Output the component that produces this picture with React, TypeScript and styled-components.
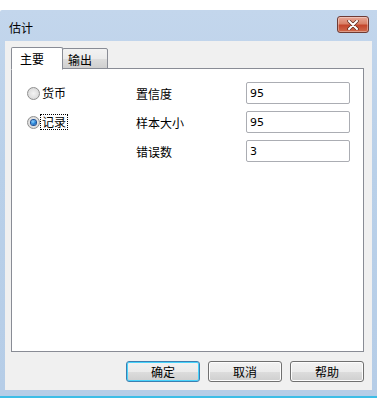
import React, { useState } from "react";
import styled, { createGlobalStyle } from "styled-components";

const GlobalStyle = createGlobalStyle`
    html, body {
        margin: 0;
        padding: 0;
        background: #ffffff;
    }
    body {
        font-family: "Noto Sans CJK SC", "Noto Sans", sans-serif;
        font-size: 12px;
        color: #000;
    }
`;

const rows = [
    { label: "置信度", value: "95" },
    { label: "样本大小", value: "95" },
    { label: "错误数", value: "3" },
];

const radios = ["货币", "记录"];

const App = () => {
    const [tab, setTab] = useState(0);
    const [mode, setMode] = useState(1);

    return (
        <>
            <GlobalStyle />
            <Page>
                <Window>
                    <TitleBar>
                        <Title>估计</Title>
                        <CloseButton aria-label="关闭">
                            <svg width="12" height="10" viewBox="0 0 12 10">
                                <path d="M2 1 L10 9 M10 1 L2 9" stroke="#5a2a20" strokeWidth="3.4" strokeLinecap="round" />
                                <path d="M2 1 L10 9 M10 1 L2 9" stroke="#ffffff" strokeWidth="2" strokeLinecap="round" />
                            </svg>
                        </CloseButton>
                    </TitleBar>
                    <Client>
                        <Tabs>
                            <Tab $active={tab === 0} onClick={() => setTab(0)}>主要</Tab>
                            <Tab $active={tab === 1} onClick={() => setTab(1)}>输出</Tab>
                        </Tabs>
                        <Panel>
                            <Form>
                                {rows.map((row, i) => (
                                    <React.Fragment key={row.label}>
                                        <RadioCell>
                                            {radios[i] && (
                                                <RadioLabel onClick={() => setMode(i)}>
                                                    <RadioCircle $checked={mode === i} />
                                                    <RadioText $focused={mode === i}>{radios[i]}</RadioText>
                                                </RadioLabel>
                                            )}
                                        </RadioCell>
                                        <Label>{row.label}</Label>
                                        <Input defaultValue={row.value} />
                                    </React.Fragment>
                                ))}
                            </Form>
                        </Panel>
                        <Buttons>
                            <Button $default>确定</Button>
                            <Button>取消</Button>
                            <Button>帮助</Button>
                        </Buttons>
                    </Client>
                </Window>
            </Page>
        </>
    );
};

export default App;

const Page = styled.div`
    width: 377px;
    height: 398px;
    padding-top: 10px;
    box-sizing: border-box;
    overflow: hidden;
`

const Window = styled.div`
    height: 388px;
    box-sizing: border-box;
    display: flex;
    flex-direction: column;
    padding: 0 5px 6px 5px;
    background: linear-gradient(to bottom, #c3d6ec 0%, #b9d0e9 40%, #b6cde7 100%);
    border-bottom: 2px solid #3dbde6;
    border-top-left-radius: 2px;
`

const TitleBar = styled.div`
    height: 31px;
    display: flex;
    align-items: center;
    justify-content: space-between;
    padding-left: 4px;
    padding-right: 3px;
`

const Title = styled.span`
    font-size: 12px;
    color: #000;
    margin-top: 3px;
`

const CloseButton = styled.div`
    width: 32px;
    height: 17px;
    box-sizing: border-box;
    margin-top: -2px;
    border: 1px solid #6e3b34;
    border-radius: 3px;
    display: flex;
    align-items: center;
    justify-content: center;
    background: linear-gradient(to bottom, #e8a796 0%, #d98268 45%, #c4462c 55%, #cf6a4c 100%);
    box-shadow: inset 0 0 0 1px rgba(255, 255, 255, 0.35);
`

const Client = styled.div`
    flex: 1;
    background: #f0f0f0;
    padding: 6px 8px 0 6px;
    display: flex;
    flex-direction: column;
`

const Tabs = styled.div`
    display: flex;
    align-items: flex-end;
    height: 22px;
    position: relative;
    z-index: 1;
    margin-bottom: -1px;
`

const Tab = styled.div<{ $active: boolean }>`
    box-sizing: border-box;
    height: ${p => p.$active ? "23px" : "21px"};
    padding: 0 ${p => p.$active ? "8px" : "5px"};
    min-width: ${p => p.$active ? "52px" : "46px"};
    display: flex;
    align-items: center;
    padding-top: ${p => p.$active ? "0" : "1px"};
    border: 1px solid #898c95;
    border-bottom: ${p => p.$active ? "1px solid #ffffff" : "1px solid #898c95"};
    margin-bottom: ${p => p.$active ? "-1px" : "0"};
    margin-left: ${p => p.$active ? "0" : "-1px"};
    background: ${p => p.$active ? "#ffffff" : "linear-gradient(to bottom, #f2f2f2 0%, #ebebeb 50%, #dddddd 51%, #cfcfcf 100%)"};
    border-radius: 2px 2px 0 0;
    cursor: default;
`

const Panel = styled.div`
    height: 284px;
    box-sizing: border-box;
    background: #ffffff;
    border: 1px solid #898c95;
    padding: 13px 0 0 15px;
`

const Form = styled.div`
    display: grid;
    grid-template-columns: 109px 110px 104px;
    grid-auto-rows: 22px;
    row-gap: 7px;
    align-items: center;
`

const RadioCell = styled.div`
    display: flex;
    align-items: center;
`

const RadioLabel = styled.label`
    display: flex;
    align-items: center;
    gap: 1px;
    cursor: default;
`

const RadioCircle = styled.span<{ $checked: boolean }>`
    width: 13px;
    height: 13px;
    box-sizing: border-box;
    border-radius: 50%;
    border: 1px solid #8f8f8f;
    background: radial-gradient(circle at 50% 50%, #f4f4f4 0%, #dcdcdc 70%, #cfcfcf 100%);
    display: flex;
    align-items: center;
    justify-content: center;
    &::after {
        content: "";
        display: ${p => p.$checked ? "block" : "none"};
        width: 5px;
        height: 5px;
        border-radius: 50%;
        background: radial-gradient(circle at 40% 35%, #8fd3ff 0%, #1f7fd6 55%, #0d3f8a 100%);
        box-shadow: 0 0 0 1px #1a4f96;
    }
`

const RadioText = styled.span<{ $focused: boolean }>`
    padding: 0 1px;
    line-height: 14px;
    outline: ${p => p.$focused ? "1px dotted #000" : "none"};
    outline-offset: 0;
`

const Label = styled.span`
    font-size: 12px;
`

const Input = styled.input`
    box-sizing: border-box;
    width: 104px;
    height: 22px;
    border: 1px solid #abadb3;
    border-radius: 2px;
    padding: 0 3px;
    font-family: "DejaVu Sans", "Liberation Sans", sans-serif;
    font-size: 11px;
    color: #000;
    background: #ffffff;
    outline: none;
`

const Buttons = styled.div`
    display: flex;
    justify-content: flex-end;
    gap: 8px;
    margin-top: 9px;
`

const Button = styled.button<{ $default?: boolean }>`
    width: 74px;
    height: 21px;
    box-sizing: border-box;
    padding: 0;
    font-family: "Noto Sans CJK SC", sans-serif;
    font-size: 12px;
    color: #000;
    border-radius: 3px;
    border: 1px solid ${p => p.$default ? "#3c7fb1" : "#707070"};
    background: linear-gradient(to bottom, #f2f2f2 0%, #ebebeb 50%, #dddddd 51%, #cfcfcf 100%);
    box-shadow: ${p => p.$default ? "inset 0 0 0 1px #48d3fb" : "inset 0 0 0 1px #fcfcfc"};
`
